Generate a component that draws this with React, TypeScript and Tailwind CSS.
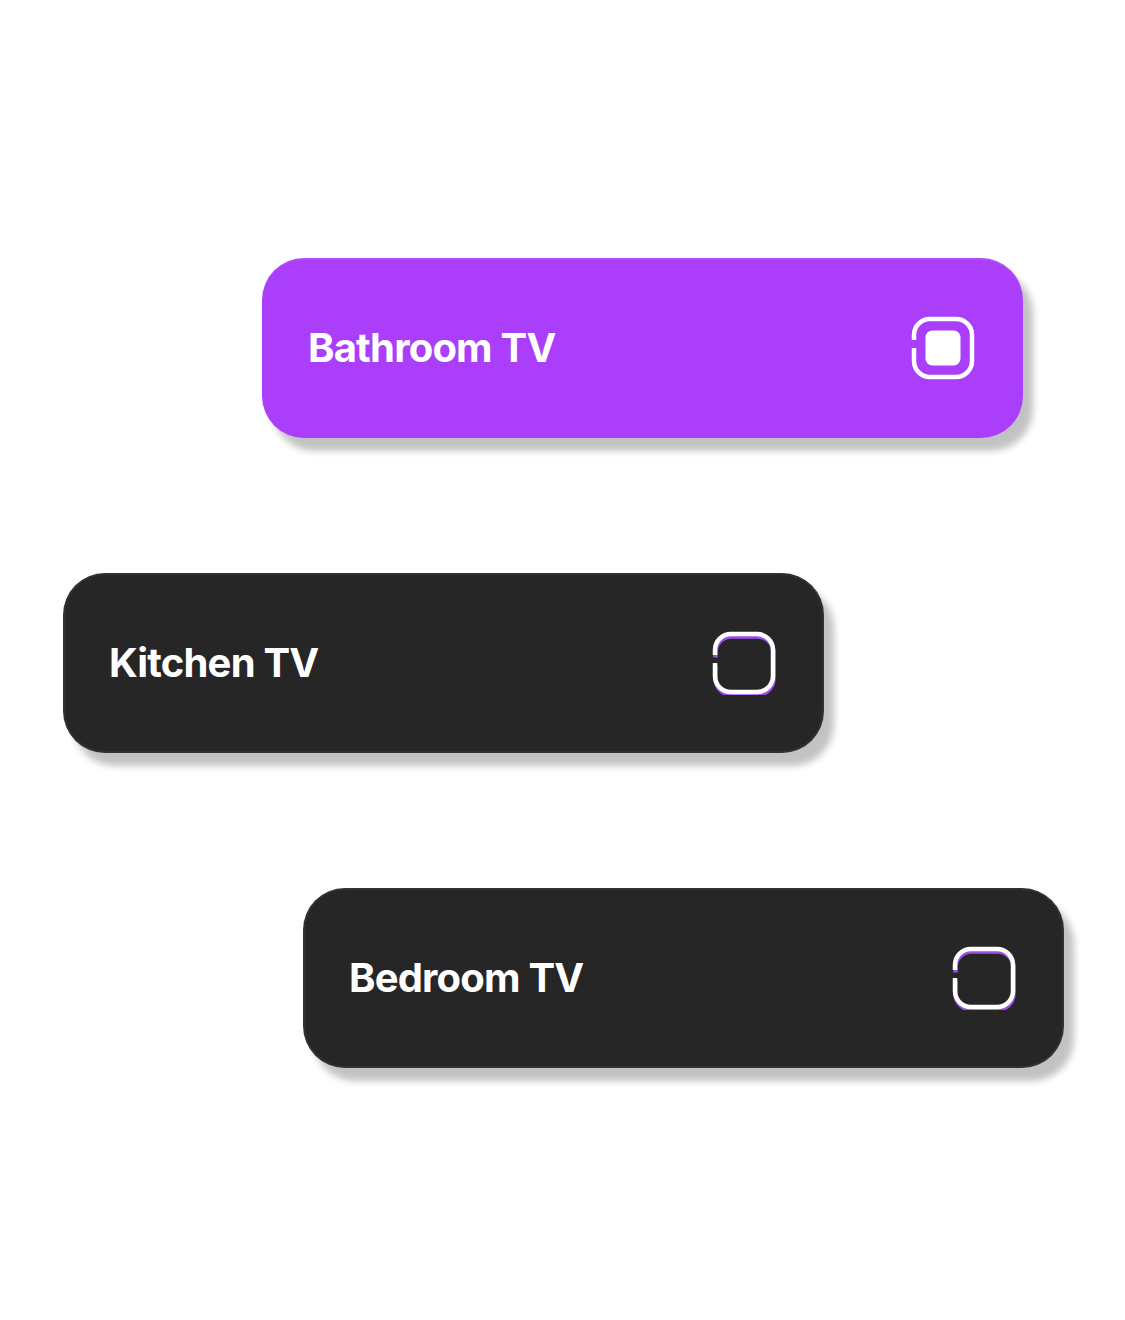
import React from "react";

function Box({ checked }: { checked: boolean }) {
  const d =
    "M3 24 V19 A16 16 0 0 1 19 3 H45 A16 16 0 0 1 61 19 V45 A16 16 0 0 1 45 61 H19 A16 16 0 0 1 3 45 V32";
  return (
    <svg width="64" height="64" viewBox="0 0 64 64" fill="none">
      {!checked && (
        <path d={d} transform="translate(0.5 2.5)" stroke="#9d4cf0" strokeWidth="4.5" />
      )}
      <path d={d} stroke="#ffffff" strokeWidth="4.5" />
      {checked && <rect x="14.5" y="14.5" width="35" height="35" rx="7" fill="#ffffff" />}
    </svg>
  );
}

function Card({
  label,
  checked,
  className,
}: {
  label: string;
  checked: boolean;
  className: string;
}) {
  return (
    <div
      className={
        "flex h-[180px] w-[761px] items-center justify-between rounded-[42px] pl-[46px] pr-[48px] " +
        className
      }
    >
      <span
        className="text-[40px] font-bold leading-none tracking-[-0.8px] text-white"
        style={{ fontFamily: "Inter, 'Noto Sans', sans-serif" }}
      >
        {label}
      </span>
      <Box checked={checked} />
    </div>
  );
}

export default function App() {
  return (
    <div className="flex min-h-[1320px] w-[1125px] flex-col gap-[135px] bg-white pt-[258px]">
      <Card
        label="Bathroom TV"
        checked
        className="ml-[262px] bg-[#aa3efb] shadow-[inset_0_2px_0_rgba(255,255,255,0.07),10px_13px_7px_rgba(0,0,0,0.24)]"
      />
      <Card
        label="Kitchen TV"
        checked={false}
        className="ml-[63px] bg-[#262626] shadow-[inset_0_0_0_2px_rgba(255,255,255,0.05),10px_13px_7px_rgba(0,0,0,0.24)]"
      />
      <Card
        label="Bedroom TV"
        checked={false}
        className="ml-[303px] bg-[#262626] shadow-[inset_0_0_0_2px_rgba(255,255,255,0.05),10px_13px_7px_rgba(0,0,0,0.24)]"
      />
    </div>
  );
}
